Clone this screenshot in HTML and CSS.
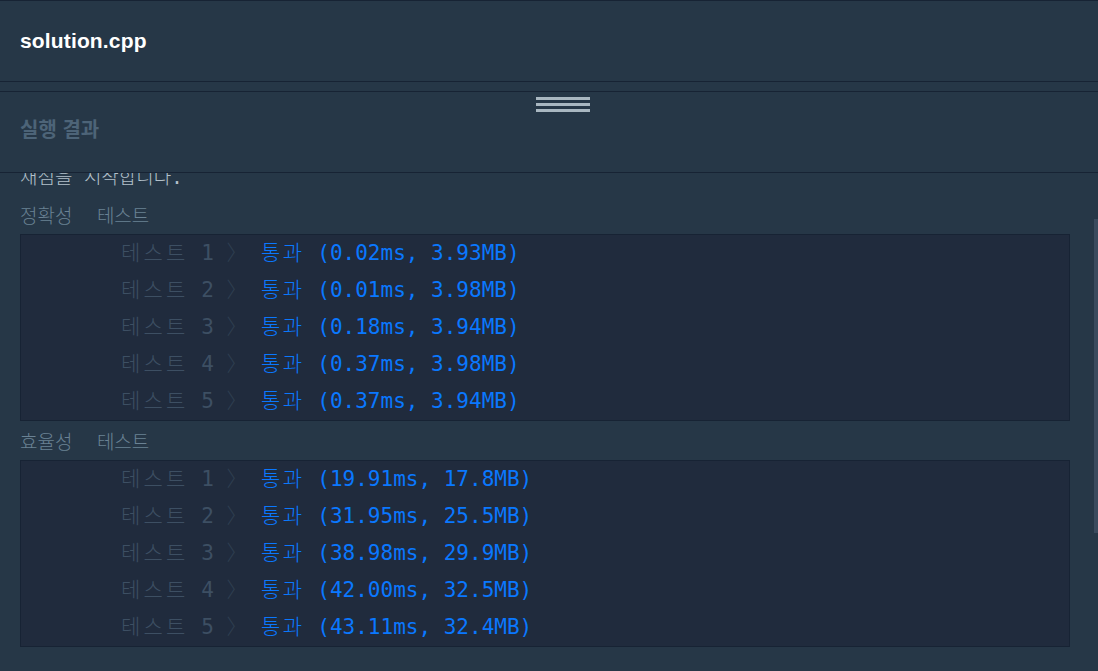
FILE: index.html
```html
<!DOCTYPE html>
<html lang="ko">
<head>
<meta charset="utf-8">
<title>solution.cpp</title>
<link rel="stylesheet" href="styles.css">
</head>
<body>
<div class="app">
  <header class="file-bar">
    <h1 class="file-name">solution.cpp</h1>
  </header>
  <div class="spacer"></div>
  <section class="result-panel">
    <div class="handle"><span></span><span></span><span></span></div>
    <h2 class="result-title">실행 결과</h2>
  </section>
  <div class="console">
    <div class="console-inner">
      <p class="line">채점을 시작합니다.</p>
      <p class="group-title">정확성 테스트</p>
      <div class="tests">
        <div class="test-row"><span class="label"><span class="ko">테스트</span> 1 <span class="arrow">〉</span></span><span class="pass"><span class="ko">통과</span> (0.02ms, 3.93MB)</span></div>
        <div class="test-row"><span class="label"><span class="ko">테스트</span> 2 <span class="arrow">〉</span></span><span class="pass"><span class="ko">통과</span> (0.01ms, 3.98MB)</span></div>
        <div class="test-row"><span class="label"><span class="ko">테스트</span> 3 <span class="arrow">〉</span></span><span class="pass"><span class="ko">통과</span> (0.18ms, 3.94MB)</span></div>
        <div class="test-row"><span class="label"><span class="ko">테스트</span> 4 <span class="arrow">〉</span></span><span class="pass"><span class="ko">통과</span> (0.37ms, 3.98MB)</span></div>
        <div class="test-row"><span class="label"><span class="ko">테스트</span> 5 <span class="arrow">〉</span></span><span class="pass"><span class="ko">통과</span> (0.37ms, 3.94MB)</span></div>
      </div>
      <p class="group-title">효율성 테스트</p>
      <div class="tests">
        <div class="test-row"><span class="label"><span class="ko">테스트</span> 1 <span class="arrow">〉</span></span><span class="pass"><span class="ko">통과</span> (19.91ms, 17.8MB)</span></div>
        <div class="test-row"><span class="label"><span class="ko">테스트</span> 2 <span class="arrow">〉</span></span><span class="pass"><span class="ko">통과</span> (31.95ms, 25.5MB)</span></div>
        <div class="test-row"><span class="label"><span class="ko">테스트</span> 3 <span class="arrow">〉</span></span><span class="pass"><span class="ko">통과</span> (38.98ms, 29.9MB)</span></div>
        <div class="test-row"><span class="label"><span class="ko">테스트</span> 4 <span class="arrow">〉</span></span><span class="pass"><span class="ko">통과</span> (42.00ms, 32.5MB)</span></div>
        <div class="test-row"><span class="label"><span class="ko">테스트</span> 5 <span class="arrow">〉</span></span><span class="pass"><span class="ko">통과</span> (43.11ms, 32.4MB)</span></div>
      </div>
    </div>
    <div class="scroll-thumb"></div>
  </div>
</div>
</body>
</html>
```

FILE: styles.css
```css
html, body {
  margin: 0;
  padding: 0;
}
body {
  background: #263747;
  width: 1098px;
  height: 671px;
  overflow: hidden;
  font-family: "Liberation Sans", Arial, sans-serif;
}
.app {
  display: flex;
  flex-direction: column;
  height: 671px;
  border-top: 1px solid #172334;
  box-sizing: border-box;
}
.file-bar {
  height: 80px;
  flex: none;
  display: flex;
  align-items: center;
  padding: 0 20px;
  border-bottom: 1px solid #172334;
}
.file-name {
  margin: 0;
  color: #ffffff;
  font-size: 21px;
  font-weight: 700;
  letter-spacing: 0.15px;
}
.spacer {
  height: 9px;
  flex: none;
  border-bottom: 1px solid #172334;
}
.result-panel {
  height: 81px;
  flex: none;
  box-sizing: border-box;
  padding: 5px 20px 0;
  border-bottom: 1px solid #172334;
}
.handle {
  width: 54px;
  margin-left: 516px;
  display: flex;
  flex-direction: column;
  gap: 3px;
}
.handle span {
  display: block;
  height: 3px;
  background: #a9b7c1;
}
.result-title {
  margin: 5px 0 0;
  line-height: 24px;
  font-size: 20px;
  font-weight: 700;
  color: #4d6478;
  font-family: "Noto Sans CJK KR", sans-serif;
}
.console {
  position: relative;
  flex: 1;
  overflow: hidden;
}
.console-inner {
  margin-top: -14px;
  padding: 0 28px 0 20px;
  font-family: "DejaVu Sans Mono", "Noto Sans CJK KR", monospace;
  font-weight: 300;
}
.line,
.group-title {
  margin: 0;
  font-size: 19px;
  white-space: pre;
}
.line {
  line-height: 36px;
  color: #b2c0ca;
}
.group-title {
  color: #6a8294;
  padding-top: 7px;
  line-height: 28px;
  margin-bottom: 4px;
  word-spacing: 13px;
}
.tests {
  background: #202b3d;
  border: 1px solid #172334;
}
.test-row {
  display: grid;
  grid-template-columns: 140px 1fr;
  height: 37px;
  box-sizing: border-box;
  padding-top: 1px;
  line-height: 34px;
  padding-left: 100px;
  font-size: 21px;
  white-space: pre;
}
.label {
  color: #3d4f63;
}
.label .ko {
  letter-spacing: 3.2px;
}
.arrow {
  color: #2f3f51;
}
.pass {
  color: #0a78ff;
}
.pass .ko {
  letter-spacing: 2.5px;
}
.scroll-thumb {
  position: absolute;
  top: 46px;
  right: 0;
  width: 4px;
  height: 314px;
  background: #3a4a5d;
}
```
